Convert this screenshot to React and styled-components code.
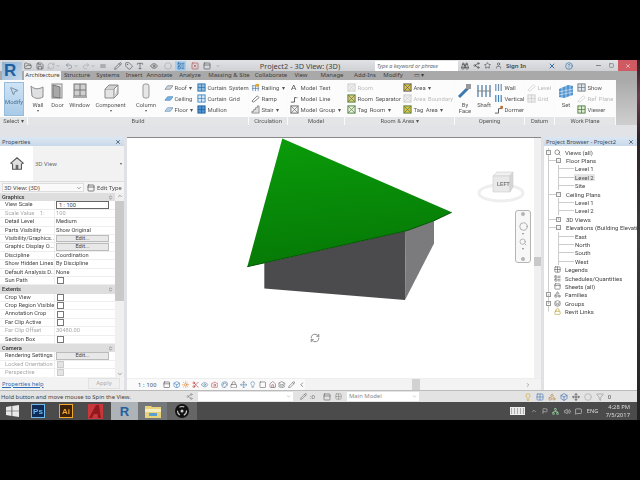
import React from 'react'
import styled, { createGlobalStyle } from 'styled-components'
import {
  FolderOpen, Save, RefreshCw, Undo2, Redo2, Equal, Pencil, Tag, Type, Eye, Circle,
  LayoutList, SquareX, PanelTop, ChevronDown, Binoculars, Share2, Star, User, X, CircleHelp,
  Minus, Square, Plus, ChevronsUpDown, ChevronUp, ChevronLeft, ChevronRight, Flag, Network,
  Volume2, MessageSquare, Filter, Lock, MousePointer2, House, Box, Sun, Scissors, Camera, Layers,
  Search, Lightbulb, Move, Grid2x2, Palette, Shapes
} from 'lucide-react'

const GlobalStyle = createGlobalStyle`
  html, body { margin: 0; padding: 0; background: #000; }
  * { box-sizing: border-box; }
`

const Screen = styled.div`
  width: 640px;
  height: 480px;
  background: #000;
  display: flex;
  flex-direction: column;
  font-family: "Noto Sans", "Open Sans", sans-serif;
  font-size: 6.2px;
  color: #444;
  overflow: hidden;
`

const Band = styled.div`
  height: 60px;
  flex: none;
  background: #000;
`

const Video = styled.div`
  height: 360px;
  flex: none;
  display: flex;
  filter: blur(0.4px);
`

const App_ = styled.div`
  width: 637px;
  display: flex;
  flex-direction: column;
`

const Edge = styled.div`
  width: 3px;
  background: linear-gradient(#2a2024 0, #6e3a4c 10%, #2b2226 22%, #3c3c3c 50%, #222 100%);
`

/* ---------- title bar and tabs ---------- */

const Header = styled.div`
  height: 20px;
  display: flex;
  background: #d6d8dc;
`

const LogoCell = styled.div`
  width: 24px;
  padding: 2px 2px 0 2px;
  background: linear-gradient(#d6d8dc 55%, #a9a9a9 55%);
`

const Logo = styled.div`
  width: 20px;
  height: 18px;
  background: linear-gradient(135deg, #8fb3d6, #c8d9ea);
  color: #23609f;
  font: bold 17px/18px "Liberation Sans", sans-serif;
  padding-left: 2px;
`

const HeaderRows = styled.div`
  flex: 1;
  display: flex;
  flex-direction: column;
`

const TitleRow = styled.div`
  height: 11px;
  display: flex;
  align-items: center;
  background: linear-gradient(#e0e2e5, #cfd1d5);
`

const Quick = styled.div`
  width: 201px;
  display: flex;
  align-items: center;
  color: #555;
`

const QuickItem = styled.span`
  display: flex;
  align-items: center;
  justify-content: center;
  height: 10px;
  width: ${p => p.$w || 8}px;
  margin-left: ${p => p.$gap || 0}px;
  background: ${p => (p.$on ? '#a9cdea' : 'transparent')};
  color: ${p => p.$color || '#555'};
`

const DocTitle = styled.div`
  width: 150px;
  text-align: center;
  font-size: 7.4px;
  color: #444;
  white-space: nowrap;
`

const SearchBox = styled.div`
  width: 83px;
  height: 10px;
  background: #fff;
  font-style: italic;
  font-size: 5.4px;
  line-height: 10px;
  padding-left: 2px;
  color: #666;
`

const Help = styled.div`
  flex: 1;
  display: flex;
  align-items: center;
  gap: 4px;
  padding-left: 3px;
  color: #444;
`

const SignIn = styled.span`
  width: 38px;
  font-size: 6px;
  font-weight: 600;
`

const WindowButtons = styled.div`
  display: flex;
  align-items: center;
  height: 11px;
  color: #444;
`

const WinButton = styled.span`
  width: ${p => (p.$close ? 19 : 13)}px;
  height: 11px;
  display: flex;
  align-items: center;
  justify-content: center;
  background: ${p => (p.$close ? '#cf5a62' : 'transparent')};
  color: ${p => (p.$close ? '#fff' : '#444')};
`

const TabRow = styled.div`
  height: 9px;
  display: flex;
  align-items: flex-end;
  background: #a9a9a9;
  color: #3c3c3c;
`

const TabItem = styled.span`
  width: ${p => p.$w}px;
  height: 9px;
  line-height: 9px;
  text-align: center;
  white-space: nowrap;
  background: ${p => (p.$active ? '#f4f5f6' : 'transparent')};
  font-size: 6px;
`

/* ---------- ribbon ---------- */

const Ribbon = styled.div`
  height: 45px;
  display: flex;
  background: #fafafa;
  gap: 1px;
  font-family: Roboto, "Noto Sans", sans-serif;
`

const Panel = styled.div`
  width: ${p => p.$w}px;
  display: flex;
  flex-direction: column;
  flex: none;
`

const PanelBody = styled.div`
  height: 37px;
  display: flex;
  background: #fcfcfc;
`

const PanelTitle = styled.div`
  height: 8px;
  line-height: 8px;
  text-align: center;
  background: #e4e5e6;
  font-size: 5.8px;
  color: #555;
`

const RibbonEnd = styled.div`
  flex: 1;
  background: linear-gradient(#aaa, #cfcfcf);
`

const ModifyTool = styled.div`
  width: 20px;
  height: 34px;
  margin: 2px 0 0 4px;
  background: linear-gradient(#cfe3f5, #a8cbe8);
  border: 1px solid #96bcdb;
  display: flex;
  flex-direction: column;
  align-items: center;
  padding-top: 3px;
  gap: 3px;
  color: #4a6d8c;
  font-size: 5.8px;
`

const BigTool = styled.div`
  width: ${p => p.$w}px;
  display: flex;
  flex-direction: column;
  align-items: center;
  padding-top: 3px;
  flex: none;
  color: #555;
  font-size: 5.8px;
  line-height: 6px;
  text-align: center;
`

const BigLabel = styled.span`
  margin-top: 3px;
  white-space: pre-line;
`

const Caret = styled.span`
  width: 0;
  height: 0;
  margin-top: 2px;
  border: 1.5px solid transparent;
  border-top: 2px solid #555;
`

const ToolColumn = styled.div`
  width: ${p => p.$w}px;
  flex: none;
  display: flex;
  flex-direction: column;
  padding: 3px 0 0 ${p => p.$pad ?? 2}px;
  gap: 2.2px;
`

const ToolRow = styled.div`
  height: 9px;
  display: flex;
  align-items: center;
  gap: 1.5px;
  white-space: nowrap;
  font-size: 5.9px;
  word-spacing: 1px;
  color: ${p => (p.$off ? '#bcbcbc' : '#555')};
`

const MenuGap = styled.div`
  height: 12px;
  background: #e1e3e6;
  flex: none;
`

/* ---------- workspace ---------- */

const Main = styled.div`
  height: 253px;
  display: flex;
  background: #dfe1e4;
`

const Side = styled.div`
  width: ${p => p.$w}px;
  flex: none;
  display: flex;
  flex-direction: column;
  background: #fff;
  overflow: hidden;
`

const SideHead = styled.div`
  height: 9px;
  flex: none;
  display: flex;
  align-items: center;
  justify-content: space-between;
  padding: 0 3px 0 2px;
  background: linear-gradient(#dbe7f3, #c9d9ea);
  color: #3d4a58;
  font-size: 5.8px;
`

const TypeBox = styled.div`
  height: 36px;
  flex: none;
  display: flex;
  align-items: center;
  background: #f2f2f2;
  border-bottom: 1px solid #ddd;
`

const TypeIcon = styled.div`
  width: 33px;
  height: 35px;
  background: #fff;
  display: flex;
  align-items: center;
  justify-content: center;
  margin-right: 2px;
`

const TypeName = styled.span`
  flex: 1;
  font-size: 5.8px;
  color: #666;
`

const SelectRow = styled.div`
  height: 11px;
  flex: none;
  display: flex;
  align-items: center;
  gap: 3px;
  padding: 0 2px 0 2px;
  font-size: 5.8px;
  background: #f4f4f4;
`

const SelectBox = styled.div`
  width: 82px;
  height: 9px;
  display: flex;
  align-items: center;
  justify-content: space-between;
  padding: 0 1px;
  background: #fafafa;
  border: 1px solid #ddd;
`

const EditType = styled.span`
  display: flex;
  align-items: center;
  gap: 2px;
  white-space: nowrap;
`

const TableWrap = styled.div`
  height: 184px;
  flex: none;
  display: flex;
`

const Table = styled.div`
  flex: 1;
  overflow: hidden;
  font-family: Roboto, "Noto Sans", sans-serif;
  font-size: 5.7px;
`

const Group = styled.div`
  height: 8.4px;
  display: flex;
  align-items: center;
  justify-content: space-between;
  padding: 0 2px;
  background: #dedede;
  font-weight: 500;
  color: #333;
`

const PropRow = styled.div`
  height: 8.4px;
  display: grid;
  grid-template-columns: 55px 1fr;
  border-bottom: 1px solid #eee;
  color: ${p => (p.$off ? '#a8a8a8' : '#444')};
  line-height: 7.4px;
`

const PropName = styled.span`
  padding-left: 5px;
  white-space: nowrap;
  overflow: hidden;
  border-right: 1px solid #eee;
`

const PropValue = styled.span`
  padding-left: 1px;
  white-space: nowrap;
  display: flex;
  align-items: center;
`

const ValueInput = styled.span`
  width: 53px;
  height: 8px;
  margin-top: -1px;
  border: 1px solid #666;
  background: #fff;
  padding-left: 2px;
  line-height: 6px;
`

const EditButton = styled.span`
  width: 53px;
  height: 7.5px;
  background: #e8e8e8;
  border: 1px solid #bbb;
  text-align: center;
  line-height: 5.5px;
`

const Check = styled.span`
  width: 7px;
  height: 7px;
  margin-left: 1px;
  border: 1px solid #777;
  background: ${p => (p.$off ? '#e4e4e4' : '#fff')};
  border-color: ${p => (p.$off ? '#ccc' : '#777')};
`

const VScroll = styled.div`
  width: ${p => p.$w || 9}px;
  flex: none;
  background: #f0f0f0;
  display: flex;
  flex-direction: column;
  align-items: center;
  justify-content: space-between;
  color: #555;
`

const Thumb = styled.div`
  width: 100%;
  height: ${p => p.$h}px;
  margin-top: ${p => p.$top}px;
  margin-bottom: auto;
  background: #c9c9c9;
`

const PropFoot = styled.div`
  height: 13px;
  flex: none;
  display: flex;
  align-items: center;
  justify-content: space-between;
  padding: 0 4px 0 2px;
  background: #f2f2f2;
  font-size: 5.8px;
`

const HelpLink = styled.span`
  color: #2a6db5;
  text-decoration: underline;
`

const Apply = styled.span`
  width: 32px;
  height: 11px;
  border: 1px solid #e2e2e2;
  text-align: center;
  line-height: 9px;
  color: #aaa;
  background: #f0f0f0;
`

const ViewColumn = styled.div`
  width: 414px;
  flex: none;
  margin: 0 3px;
  display: flex;
  flex-direction: column;
  background: #fff;
  border-top: 1px solid #888;
`

const ViewArea = styled.div`
  flex: 1;
  display: flex;
  min-height: 0;
`

const Canvas = styled.div`
  flex: 1;
  position: relative;
  overflow: hidden;
  background: #fff;
`

const Model = styled.svg`
  display: block;
  width: 100%;
  height: 100%;
`

const CubeSpot = styled.svg`
  position: absolute;
  left: 350px;
  top: 30px;
`

const NavBar = styled.div`
  position: absolute;
  left: 388px;
  top: 72px;
  width: 16px;
  height: 53px;
  border: 1px solid #b5b5b5;
  border-radius: 3px;
  background: #f7f7f7;
  display: flex;
  flex-direction: column;
  align-items: center;
  justify-content: space-between;
  padding: 1px 0;
  color: #999;
`

const NavKnob = styled.span`
  width: 4px;
  height: 4px;
  border-radius: 50%;
  background: #b5b5b5;
`

const NavGroup = styled.span`
  display: flex;
  flex-direction: column;
  align-items: center;
  gap: 2px;
`

const NavDrop = styled.span`
  width: 0;
  height: 0;
  border: 1.5px solid transparent;
  border-top: 2px solid #888;
`

const SpinCursor = styled.span`
  position: absolute;
  left: 183px;
  top: 195px;
  color: #777;
  display: flex;
`

const ViewBar = styled.div`
  height: 12px;
  flex: none;
  display: flex;
  align-items: center;
  background: #fafafa;
  border-top: 1px solid #eee;
`

const ScaleText = styled.span`
  width: 36px;
  padding-left: 11px;
  white-space: nowrap;
  letter-spacing: .2px;
  font-size: 5.6px;
  flex: none;
`

const BarIcons = styled.div`
  width: 142px;
  flex: none;
  display: flex;
  align-items: center;
  gap: 2.2px;
`

const HScroll = styled.div`
  flex: 1;
  height: 100%;
  display: flex;
  align-items: center;
  background: #f3f3f3;
  padding-left: 107px;
  justify-content: space-between;
  padding-right: 10px;
  color: #666;
`

const HThumb = styled.div`
  width: 8px;
  height: 100%;
  background: #d2d2d2;
`

const TreeList = styled.div`
  flex: 1;
  padding-top: 2px;
  background: #fff;
`

const TreeRow = styled.div`
  height: 8.4px;
  display: flex;
  align-items: center;
  padding-left: ${p => p.$indent}px;
  white-space: nowrap;
  font-family: Roboto, "Noto Sans", sans-serif;
  font-size: 6px;
  color: #444;
  background:
    ${p => (p.$level === 2 ? 'linear-gradient(#ccc,#ccc) 14px 50%/16px 1px no-repeat,' : '')}
    ${p => (p.$level === 1 ? 'linear-gradient(#ccc,#ccc) 4px 50%/8px 1px no-repeat,' : '')}
    ${p => (p.$level === 2 ? 'linear-gradient(#ccc,#ccc) 14px 0/1px 100% no-repeat,' : '')}
    ${p => (p.$last ? 'linear-gradient(#ccc,#ccc) 4px 0/1px 50% no-repeat' : 'linear-gradient(#ccc,#ccc) 4px 0/1px 100% no-repeat')};
`

const Expander = styled.span`
  width: 5px;
  height: 5px;
  flex: none;
  border: 1px solid #999;
  background: #fff;
  display: flex;
  align-items: center;
  justify-content: center;
  color: #555;
  visibility: ${p => (p.$hidden ? 'hidden' : 'visible')};
`

const TreeIcon = styled.span`
  width: 8px;
  height: 7px;
  flex: none;
  margin: 0 3px 0 2px;
  display: flex;
  align-items: center;
  justify-content: center;
  color: #555;
`

const TreeText = styled.span`
  margin-left: ${p => p.$gap || 0}px;
  padding: 0 1px;
  background: ${p => (p.$picked ? '#e6e6e6' : 'transparent')};
`

/* ---------- status bar and taskbar ---------- */

const StatusBar = styled.div`
  height: 12px;
  flex: none;
  display: flex;
  align-items: center;
  background: #e3e3e3;
  border-top: 1px solid #bbb;
  color: #444;
  font-size: 5.9px;
`

const StatusText = styled.span`
  width: 186px;
  padding-left: 1px;
  white-space: nowrap;
  flex: none;
`

const StatusSlot = styled.span`
  width: ${p => p.$w}px;
  flex: none;
  display: flex;
  align-items: center;
  gap: 3px;
  padding-left: ${p => p.$pad || 0}px;
  color: ${p => p.$color || '#888'};
`

const StatusInput = styled.span`
  width: ${p => p.$w}px;
  height: 9px;
  flex: none;
  margin-left: ${p => p.$gap || 0}px;
  background: #fff;
  color: #888;
  padding-left: 2px;
  line-height: 9px;
  display: flex;
  justify-content: space-between;
  padding-right: 2px;
  align-items: center;
`

const StatusIcons = styled.div`
  margin-left: auto;
  padding-right: 26px;
  display: flex;
  align-items: center;
  gap: 4px;
`

const Taskbar = styled.div`
  height: 18px;
  flex: none;
  display: flex;
  align-items: stretch;
  background: #4b4b4b;
`

const TaskSlot = styled.div`
  width: ${p => p.$w}px;
  flex: none;
  margin-left: ${p => p.$gap || 0}px;
  display: flex;
  align-items: center;
  justify-content: center;
  background: ${p => p.$bg || 'transparent'};
`

const AppTile = styled.span`
  width: ${p => p.$s || 14}px;
  height: ${p => p.$s || 14}px;
  display: flex;
  align-items: center;
  justify-content: center;
  font: bold ${p => p.$fs || 8}px "Liberation Sans", sans-serif;
  color: ${p => p.$color};
  background: ${p => p.$bg};
  border: ${p => (p.$line ? `1px solid ${p.$line}` : 'none')};
`

const Tray = styled.div`
  margin-left: auto;
  display: flex;
  align-items: center;
  gap: 4.5px;
  color: #ddd;
  padding-right: 7px;
`

const TrayKeys = styled.span`
  width: 15px;
  height: 8px;
  margin-right: 2px;
  background: repeating-linear-gradient(90deg, #aaa 0 1px, #e8e8e8 1px 3px);
  border: 1px solid #eee;
`

const TrayText = styled.span`
  font-size: 5.6px;
  color: #ddd;
`

const Clock = styled.span`
  margin-left: 3px;
  font-size: 5.8px;
  line-height: 8px;
  text-align: right;
  color: #ddd;
`

/* ---------- drawings ---------- */

const Mini = ({ c = '#5d7fa3', d = '#cfd8e2', kind }) => {
  const shapes = {
    slab: <><path d="M1 7 L4 3 H10 L7 7Z" fill={d} stroke={c} strokeWidth=".7" /></>,
    panel: <><rect x="1" y="1" width="8" height="8" fill={d} stroke={c} /><path d="M5 1V9M1 5H9" stroke={c} strokeWidth=".8" /></>,
    stair: <path d="M1 9V7H3V5H5V3H7V1H9V9Z" fill={d} stroke={c} strokeWidth=".7" />,
    ramp: <path d="M1 8 L7 2 L9 4 L3 9Z" fill="#fff" stroke={c} strokeWidth=".8" />,
    rail: <><path d="M1 3H9M1 6H9M2 3V9M5 3V9M8 3V9" stroke={c} strokeWidth=".8" /><rect x="5" y="1" width="4" height="3" fill={d} /></>,
    box: <><rect x="1" y="1" width="8" height="8" fill={d} stroke={c} /><path d="M1 1L9 9M9 1L1 9" stroke={c} strokeWidth=".7" /></>,
    bars: <><path d="M2 1V9M5 1V9M8 1V9" stroke={c} strokeWidth="1.3" /></>,
    cut: <><path d="M1 9H5V4H9" fill="none" stroke={c} strokeWidth="1" /><rect x="7" y="1" width="3" height="3" fill={d} /></>,
    letter: <text x="1" y="8" fontSize="9" fill={c} fontFamily="Liberation Sans">A</text>
  }
  return <svg width="9" height="9" viewBox="0 0 10 10" style={{ flex: 'none' }}>{shapes[kind]}</svg>
}

const Big = ({ kind }) => {
  const art = {
    wall: <path d="M1 3 C5 7 9 6 13 4 V14 C9 16 5 16 2 13Z" fill="#dfe0e1" stroke="#8a8a8a" />,
    door: <><rect x="2" y="1" width="10" height="14" fill="#e8e8e8" stroke="#8a8a8a" /><path d="M3 2 L10 4 V15 L3 14Z" fill="#a9a9a9" stroke="#777" /></>,
    window: <><rect x="2" y="1" width="12" height="12" fill="#cfcfcf" stroke="#777" /><path d="M8 1V13M2 7H14" stroke="#777" /><rect x="1" y="13" width="14" height="2" fill="#aaa" /></>,
    component: <><path d="M2 6 H11 V15 H2Z" fill="#e4e4e4" stroke="#8a8a8a" /><path d="M2 6 L6 2 H15 L11 6 M11 15 L15 11 V2" fill="#d0d0d0" stroke="#8a8a8a" /></>,
    column: <rect x="5" y="1" width="6" height="14" rx="2" fill="#e6e6e6" stroke="#999" />,
    face: <><path d="M2 14 L13 3" stroke="#3e78b2" strokeWidth="3" /><rect x="9" y="1" width="5" height="5" fill="#999" /></>,
    shaft: <><path d="M2 2V14M6 2V14M10 2V14M14 2V14" stroke="#6b8fb3" strokeWidth="1.5" /><path d="M1 8H15" stroke="#888" /></>,
    set: <><path d="M1 6 L10 2 L15 3 V12 L6 15 L1 14Z" fill="#4f93cf" /><path d="M4 5V15M8 3V14M12 2V13M1 9L15 6M1 12L15 9" stroke="#d7e8f6" strokeWidth=".7" /></>
  }
  return <svg width="16" height="16" viewBox="0 0 16 16">{art[kind]}</svg>
}

const ModelDrawing = () => (
  <Model viewBox="127 138 407 240" preserveAspectRatio="xMinYMin meet">
    <defs>
      <linearGradient id="roof" x1="0" y1="0" x2="0.15" y2="1">
        <stop offset="0" stopColor="#0a9c0a" />
        <stop offset="1" stopColor="#067a06" />
      </linearGradient>
    </defs>
    <polygon points="264.3,263 264.3,288.5 405,300 405.7,231" fill="#4b4a4c" />
    <polygon points="405.7,231 434,221 434,243.5 405,300" fill="#7b7a7c" />
    <polygon points="282.3,138.5 451.7,212.3 433.3,221 406.7,230.7 247.3,266.7" fill="url(#roof)" />
    <polyline points="451.7,212.3 433.3,221 406.7,230.7 247.3,266.7" fill="none" stroke="#035303" strokeWidth="1" />
  </Model>
)

const ViewCube = () => (
  <CubeSpot width="54" height="40" viewBox="0 0 54 40">
    <ellipse cx="24" cy="25" rx="22" ry="8" fill="none" stroke="#eeeeee" strokeWidth="3" />
    <path d="M16 8 L20 4 H36 L33 8Z" fill="#f0f0f0" stroke="#ccc" strokeWidth=".6" />
    <path d="M16 8 H33 V24 H16Z" fill="#e9e9e9" stroke="#ccc" strokeWidth=".6" />
    <path d="M33 8 L36 4 V19 L33 24Z" fill="#d6d6d6" stroke="#ccc" strokeWidth=".6" />
    <text x="20" y="18" fontSize="5" fontWeight="700" fill="#777" fontFamily="Liberation Sans">LEFT</text>
  </CubeSpot>
)

const HouseIcon = () => (
  <svg width="16" height="16" viewBox="0 0 18 18">
    <path d="M2 8 L9 2 L16 8 L14 9 V15 H4 V9Z" fill="#e0e0e0" stroke="#555" strokeWidth="1.2" />
    <rect x="7.5" y="10" width="3" height="5" fill="#666" />
  </svg>
)

const WinLogo = () => (
  <svg width="13" height="12" viewBox="0 0 13 12">
    <path d="M0 2 L5.5 1 V5.7 H0Z M6.3 .9 L13 0 V5.7 H6.3Z M0 6.3 H5.5 V11 L0 10Z M6.3 6.3 H13 V12 L6.3 11.1Z" fill="#e8e8e8" />
  </svg>
)

const Autodesk = () => (
  <svg width="15" height="15" viewBox="0 0 15 15">
    <rect width="15" height="15" fill="#c9373b" />
    <path d="M1 14 L8 1 H11 L13 14 H10 L9.5 10 H6 L4 14Z" fill="#8f1a1d" />
  </svg>
)

const FolderTile = () => (
  <svg width="16" height="14" viewBox="0 0 16 14">
    <path d="M0 2 H6 L7 3 H16 V14 H0Z" fill="#e8d27a" />
    <rect x="0" y="5" width="16" height="3" fill="#f5edc0" />
    <rect x="4" y="9" width="8" height="3" fill="#5aa0d0" />
  </svg>
)

const Obs = () => (
  <svg width="14" height="14" viewBox="0 0 14 14">
    <circle cx="7" cy="7" r="7" fill="#111" />
    <circle cx="7" cy="7" r="4.5" fill="none" stroke="#ccc" strokeWidth="1.2" strokeDasharray="5 4" />
    <circle cx="7" cy="7" r="1.5" fill="#ccc" />
  </svg>
)

/* ---------- data ---------- */

const quickItems = [
  { Icon: FolderOpen, gap: 0 }, { Icon: Save, gap: 4 }, { Icon: RefreshCw, gap: 3, color: '#aaa' }, { Icon: ChevronDown, gap: 1, w: 4 },
  { Icon: Undo2, gap: 5, color: '#7d8a96' }, { Icon: ChevronDown, gap: 1, w: 4 }, { Icon: Redo2, gap: 4, color: '#aaa' }, { Icon: ChevronDown, gap: 1, w: 4 },
  { Icon: Equal, gap: 4 }, { Icon: Pencil, gap: 7 }, { Icon: Tag, gap: 3 }, { Icon: Type, gap: 3 },
  { Icon: Eye, gap: 6 }, { Icon: Circle, gap: 6, color: '#aaa' }, { Icon: LayoutList, gap: 3, w: 11, on: true, color: '#1f5f9e' },
  { Icon: SquareX, gap: 5, color: '#b05050' }, { Icon: PanelTop, gap: 4 }, { Icon: ChevronDown, gap: 5, w: 4 }
]

const tabs = [
  ['Architecture', 37, true], ['Structure', 32], ['Systems', 30], ['Insert', 22], ['Annotate', 29],
  ['Analyze', 32], ['Massing & Site', 46], ['Collaborate', 38], ['View', 22], ['Manage', 40],
  ['Add-Ins', 26], ['Modify', 30]
]

const propRows = [
  { group: 'Graphics' },
  { name: 'View Scale', input: '1 : 100' },
  { name: 'Scale Value \u00a0\u00a0\u00a01:', value: '100', off: true },
  { name: 'Detail Level', value: 'Medium' },
  { name: 'Parts Visibility', value: 'Show Original' },
  { name: 'Visibility/Graphics...', edit: true },
  { name: 'Graphic Display O...', edit: true },
  { name: 'Discipline', value: 'Coordination' },
  { name: 'Show Hidden Lines', value: 'By Discipline' },
  { name: 'Default Analysis D...', value: 'None' },
  { name: 'Sun Path', check: true },
  { group: 'Extents' },
  { name: 'Crop View', check: true },
  { name: 'Crop Region Visible', check: true },
  { name: 'Annotation Crop', check: true },
  { name: 'Far Clip Active', check: true },
  { name: 'Far Clip Offset', value: '30480.00', off: true },
  { name: 'Section Box', check: true },
  { group: 'Camera' },
  { name: 'Rendering Settings', edit: true },
  { name: 'Locked Orientation', check: true, off: true },
  { name: 'Perspective', check: true, off: true }
]

const tree = [
  { level: 0, text: 'Views (all)', open: 'minus', Icon: Search },
  { level: 1, text: 'Floor Plans', open: 'minus' },
  { level: 2, text: 'Level 1' },
  { level: 2, text: 'Level 2', picked: true },
  { level: 2, text: 'Site' },
  { level: 1, text: 'Ceiling Plans', open: 'minus' },
  { level: 2, text: 'Level 1' },
  { level: 2, text: 'Level 2' },
  { level: 1, text: '3D Views', open: 'plus' },
  { level: 1, text: 'Elevations (Building Elevation)', open: 'minus' },
  { level: 2, text: 'East' },
  { level: 2, text: 'North' },
  { level: 2, text: 'South' },
  { level: 2, text: 'West' },
  { level: 0, text: 'Legends', Icon: Grid2x2 },
  { level: 0, text: 'Schedules/Quantities', Icon: LayoutList },
  { level: 0, text: 'Sheets (all)', Icon: PanelTop },
  { level: 0, text: 'Families', open: 'plus', Icon: Shapes },
  { level: 0, text: 'Groups', open: 'plus', Icon: Layers },
  { level: 0, text: 'Revit Links', Icon: Lock, last: true, color: '#b59a22' }
]

const barIcons = [
  [PanelTop, '#555'], [Box, '#3d82c4'], [Sun, '#d97a1f'], [Scissors, '#c23b3b'], [Eye, '#5d87ad'],
  [Camera, '#b84a4a'], [Palette, '#5d87ad'], [Lock, '#666'], [Move, '#5d87ad'], [Lightbulb, '#5d87ad'],
  [Square, '#666'], [House, '#886060'], [Layers, '#666'], [Pencil, '#666'], [ChevronLeft, '#555']
]

const statusIcons = [
  [Lightbulb, '#d2a52a'], [Grid2x2, '#4f7fb5'], [Shapes, '#c08a4a'], [Box, '#3d6fb0'], [Move, '#444'], [Circle, '#aaa']
]

const Tool = ({ w, kind, label, caret }) => (
  <BigTool $w={w}>
    <Big kind={kind} />
    <BigLabel>{label}</BigLabel>
    {caret && <Caret />}
  </BigTool>
)

const Item = ({ kind, c, d, off, children }) => (
  <ToolRow $off={off}>
    <Mini kind={kind} c={off ? '#ccc' : c} d={off ? '#eee' : d} />
    <span>{children}</span>
  </ToolRow>
)

const App = () => (
  <Screen>
    <GlobalStyle />
    <Band />
    <Video>
      <App_>
        <Header>
          <LogoCell><Logo>R</Logo></LogoCell>
          <HeaderRows>
            <TitleRow>
              <Quick>
                {quickItems.map(({ Icon, gap, color, w, on }, i) => (
                  <QuickItem key={i} $gap={gap} $color={color} $w={w} $on={on}><Icon size={w === 4 ? 4 : 8} strokeWidth={2} /></QuickItem>
                ))}
              </Quick>
              <DocTitle>Project2 - 3D View: (3D)</DocTitle>
              <SearchBox>Type a keyword or phrase</SearchBox>
              <Help>
                <Binoculars size={8} />
                <Share2 size={7} />
                <Star size={7} />
                <User size={7} />
                <SignIn>Sign In</SignIn>
                <X size={8} color="#2f6fa8" strokeWidth={3} />
                <CircleHelp size={8} color="#2f6fa8" style={{ marginLeft: 5 }} />
              </Help>
              <WindowButtons>
                <WinButton><Minus size={7} /></WinButton>
                <WinButton><Square size={5} /></WinButton>
                <WinButton $close><X size={6} /></WinButton>
              </WindowButtons>
            </TitleRow>
            <TabRow>
              {tabs.map(([name, w, active]) => <TabItem key={name} $w={w} $active={active}>{name}</TabItem>)}
              <TabItem $w={22}>▭ ▾</TabItem>
            </TabRow>
          </HeaderRows>
        </Header>

        <Ribbon>
          <Panel $w={27}>
            <PanelBody>
              <ModifyTool><MousePointer2 size={10} color="#6a7f92" />Modify</ModifyTool>
            </PanelBody>
            <PanelTitle>Select ▾</PanelTitle>
          </Panel>
          <Panel $w={220}>
            <PanelBody>
              <Tool w={20} kind="wall" label="Wall" caret />
              <Tool w={19} kind="door" label="Door" />
              <Tool w={25} kind="window" label="Window" />
              <Tool w={37} kind="component" label="Component" caret />
              <Tool w={34} kind="column" label="Column" caret />
              <ToolColumn $w={33} $pad={1}>
                <Item kind="slab" c="#777" d="#c9d5e2">Roof ▾</Item>
                <Item kind="slab" c="#3b7fbb" d="#7fb2de">Ceiling</Item>
                <Item kind="slab" c="#5d88ad" d="#b9d1e6">Floor ▾</Item>
              </ToolColumn>
              <ToolColumn $w={52} $pad={1}>
                <Item kind="panel" c="#2f6fa8" d="#8fbde0">Curtain System</Item>
                <Item kind="panel" c="#3f87c4" d="#d5e6f4">Curtain Grid</Item>
                <Item kind="panel" c="#1f5f9e" d="#4f93cf">Mullion</Item>
              </ToolColumn>
            </PanelBody>
            <PanelTitle>Build</PanelTitle>
          </Panel>
          <Panel $w={38}>
            <PanelBody>
              <ToolColumn $w={38}>
                <Item kind="rail" c="#4f7fb5" d="#e0a93a">Railing ▾</Item>
                <Item kind="ramp" c="#555">Ramp</Item>
                <Item kind="stair" c="#666" d="#ddd">Stair ▾</Item>
              </ToolColumn>
            </PanelBody>
            <PanelTitle>Circulation</PanelTitle>
          </Panel>
          <Panel $w={56}>
            <PanelBody>
              <ToolColumn $w={56}>
                <Item kind="letter" c="#555">Model Text</Item>
                <Item kind="cut" c="#555" d="#fff">Model Line</Item>
                <Item kind="box" c="#666" d="#eee">Model Group ▾</Item>
              </ToolColumn>
            </PanelBody>
            <PanelTitle>Model</PanelTitle>
          </Panel>
          <Panel $w={109}>
            <PanelBody>
              <ToolColumn $w={56}>
                <Item kind="box" off>Room</Item>
                <Item kind="box" c="#4d7a3d" d="#d9c778">Room Separator</Item>
                <Item kind="box" c="#4d7a3d" d="#e3eedb">Tag Room ▾</Item>
              </ToolColumn>
              <ToolColumn $w={53}>
                <Item kind="box" c="#555" d="#d9c24a">Area ▾</Item>
                <Item kind="box" off>Area Boundary</Item>
                <Item kind="box" c="#4d7a3d" d="#d9c24a">Tag Area ▾</Item>
              </ToolColumn>
            </PanelBody>
            <PanelTitle>Room &amp; Area ▾</PanelTitle>
          </Panel>
          <Panel $w={69}>
            <PanelBody>
              <Tool w={20} kind="face" label={'By\nFace'} />
              <Tool w={18} kind="shaft" label="Shaft" />
              <ToolColumn $w={31} $pad={1}>
                <Item kind="bars" c="#6b8fb3">Wall</Item>
                <Item kind="bars" c="#3b7fbb">Vertical</Item>
                <Item kind="cut" c="#555" d="#b9733a">Dormer</Item>
              </ToolColumn>
            </PanelBody>
            <PanelTitle>Opening</PanelTitle>
          </Panel>
          <Panel $w={29}>
            <PanelBody>
              <ToolColumn $w={29}>
                <Item kind="ramp" off>Level</Item>
                <Item kind="panel" off>Grid</Item>
              </ToolColumn>
            </PanelBody>
            <PanelTitle>Datum</PanelTitle>
          </Panel>
          <Panel $w={60}>
            <PanelBody>
              <Tool w={22} kind="set" label="Set" />
              <ToolColumn $w={38} $pad={0}>
                <Item kind="panel" c="#777" d="#dbe6f0">Show</Item>
                <Item kind="ramp" off>Ref Plane</Item>
                <Item kind="panel" c="#4d7a3d" d="#dcecd3">Viewer</Item>
              </ToolColumn>
            </PanelBody>
            <PanelTitle>Work Plane</PanelTitle>
          </Panel>
          <RibbonEnd />
        </Ribbon>

        <MenuGap />

        <Main>
          <Side $w={124}>
            <SideHead>Properties <X size={6} strokeWidth={3} /></SideHead>
            <TypeBox>
              <TypeIcon><HouseIcon /></TypeIcon>
              <TypeName>3D View</TypeName>
              <Caret style={{ marginRight: 2 }} />
            </TypeBox>
            <SelectRow>
              <SelectBox>3D View: (3D) <ChevronDown size={6} /></SelectBox>
              <EditType><PanelTop size={8} />Edit Type</EditType>
            </SelectRow>
            <TableWrap>
              <Table>
                {propRows.map((row, i) => row.group ? (
                  <Group key={i}>{row.group}<ChevronsUpDown size={5} /></Group>
                ) : (
                  <PropRow key={i} $off={row.off}>
                    <PropName>{row.name}</PropName>
                    <PropValue>
                      {row.value}
                      {row.input && <ValueInput>{row.input}</ValueInput>}
                      {row.edit && <EditButton>Edit...</EditButton>}
                      {row.check && <Check $off={row.off} />}
                    </PropValue>
                  </PropRow>
                ))}
              </Table>
              <VScroll>
                <ChevronUp size={6} />
                <Thumb $h={100} $top={2} />
                <ChevronDown size={6} />
              </VScroll>
            </TableWrap>
            <PropFoot>
              <HelpLink>Properties help</HelpLink>
              <Apply>Apply</Apply>
            </PropFoot>
          </Side>

          <ViewColumn>
            <ViewArea>
              <Canvas>
                <ModelDrawing />
                <ViewCube />
                <NavBar>
                  <NavKnob />
                  <NavGroup>
                    <Circle size={9} />
                    <NavDrop />
                    <Search size={8} />
                    <NavDrop />
                  </NavGroup>
                  <NavKnob />
                </NavBar>
                <SpinCursor><RefreshCw size={10} /></SpinCursor>
              </Canvas>
              <VScroll $w={7}>
                <Thumb $h={9} $top={119} />
              </VScroll>
            </ViewArea>
            <ViewBar>
              <ScaleText>1 : 100</ScaleText>
              <BarIcons>
                {barIcons.map(([Icon, color], i) => <Icon key={i} size={7.5} color={color} />)}
              </BarIcons>
              <HScroll>
                <HThumb />
                <ChevronRight size={6} />
              </HScroll>
            </ViewBar>
          </ViewColumn>

          <Side $w={93}>
            <SideHead>Project Browser - Project2 <X size={6} strokeWidth={3} /></SideHead>
            <TreeList>
              {tree.map((row, i) => (
                <TreeRow key={i} $level={row.level} $last={row.last} $indent={row.level === 2 ? 30 : row.level === 1 ? 12 : 2}>
                  {row.level !== 2 && (
                    <Expander $hidden={!row.open}>
                      {row.open === 'plus' ? <Plus size={4} /> : <Minus size={4} />}
                    </Expander>
                  )}
                  {row.level === 0 && <TreeIcon><row.Icon size={7} color={row.color || '#555'} /></TreeIcon>}
                  <TreeText $picked={row.picked} $gap={row.level === 1 ? 4 : 0}>{row.text}</TreeText>
                </TreeRow>
              ))}
            </TreeList>
          </Side>
        </Main>

        <StatusBar>
          <StatusText>Hold button and move mouse to Spin the View.</StatusText>
          <StatusSlot $w={12}><Share2 size={7} /></StatusSlot>
          <StatusInput $w={95}><span /><ChevronDown size={5} /></StatusInput>
          <StatusSlot $w={30} $pad={7} $color="#666"><Pencil size={7} />:0</StatusSlot>
          <StatusSlot $w={12} $color="#666"><PanelTop size={8} /></StatusSlot>
          <StatusSlot $w={12}><Grid2x2 size={7} /></StatusSlot>
          <StatusInput $w={72}>Main Model<ChevronDown size={5} /></StatusInput>
          <StatusIcons>
            {statusIcons.map(([Icon, color], i) => <Icon key={i} size={8} color={color} />)}
            <Filter size={8} color="#999" />
            <span>0</span>
          </StatusIcons>
        </StatusBar>

        <Taskbar>
          <TaskSlot $w={24}><WinLogo /></TaskSlot>
          <TaskSlot $w={28}><AppTile $bg="#0f2a55" $color="#6db8ef" $line="#6db8ef">Ps</AppTile></TaskSlot>
          <TaskSlot $w={28}><AppTile $bg="#3c2208" $color="#f2a72e" $line="#f2a72e">Ai</AppTile></TaskSlot>
          <TaskSlot $w={30}><Autodesk /></TaskSlot>
          <TaskSlot $w={27} $gap={1} $bg="#aeb3b8"><AppTile $bg="transparent" $color="#23609f" $s={15} $fs={13}>R</AppTile></TaskSlot>
          <TaskSlot $w={29} $bg="#74787a"><FolderTile /></TaskSlot>
          <TaskSlot $w={30} $bg="#666"><Obs /></TaskSlot>
          <Tray>
            <TrayKeys />
            <ChevronUp size={6} />
            <Flag size={6} />
            <Network size={7} color="#9be0a8" />
            <Volume2 size={7} />
            <MessageSquare size={7} />
            <TrayText>ENG</TrayText>
            <Clock>4:28 PM<br />7/5/2017</Clock>
          </Tray>
        </Taskbar>
      </App_>
      <Edge />
    </Video>
    <Band />
  </Screen>
)

export default App
